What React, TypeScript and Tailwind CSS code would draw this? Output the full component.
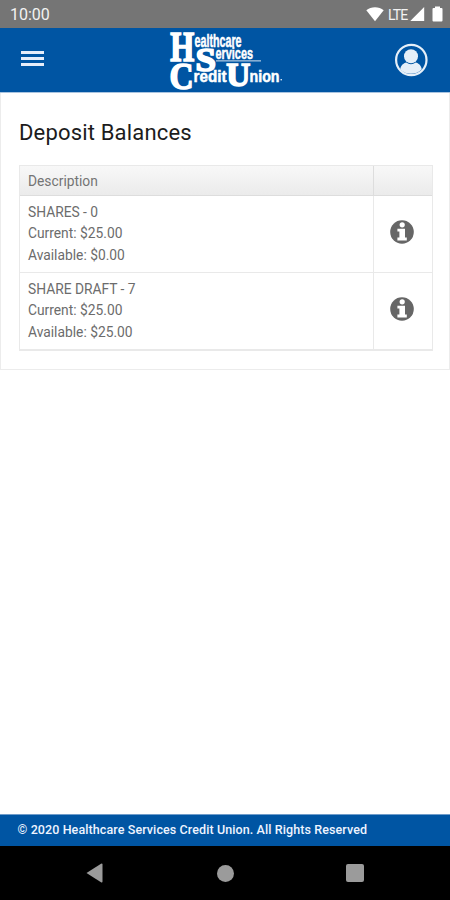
import React from "react";

const accounts = [
  { name: "SHARES - 0", current: "$25.00", available: "$0.00" },
  { name: "SHARE DRAFT - 7", current: "$25.00", available: "$25.00" },
];

function InfoIcon() {
  return (
    <svg width="24" height="24" viewBox="0 0 24 24">
      <circle cx="12" cy="12" r="11.8" className="fill-[#666666]" />
      <g className="fill-white">
        <circle cx="12.2" cy="4.8" r="2.6" />
        <path d="M7.4 8.8H15V17.6H16.8V20.6H7.4V17.6H9.4V11.6H7.4Z" />
      </g>
    </svg>
  );
}

function StatusBar() {
  return (
    <div className="flex h-7 items-center justify-between bg-[#757575] pl-[10px] pr-[7px] text-[#f2f2f2]">
      <span className="pt-[2px] text-[16px] leading-none">10:00</span>
      <div className="flex items-center">
        <svg width="18" height="16" viewBox="0 0 18 16" className="mr-[4px] fill-white">
          <path d="M0.3 4.2C5 0.2 13 0.2 17.7 4.2L9 15.3Z" />
        </svg>
        <span className="mr-[3px] w-[19px] pt-px text-[14px] leading-none tracking-[-0.9px]">LTE</span>
        <svg width="15" height="16" viewBox="0 0 15 16" className="mr-[7px] fill-white">
          <path d="M14.2 1V15H0.3Z" />
        </svg>
        <svg width="11" height="16" viewBox="0 0 11 16" className="fill-white">
          <path d="M3 0.5H8V2H9.5Q10.5 2 10.5 3V14.5Q10.5 15.5 9.5 15.5H1.5Q0.5 15.5 0.5 14.5V3Q0.5 2 1.5 2H3Z" />
        </svg>
      </div>
    </div>
  );
}

function Logo() {
  const fit = "spacingAndGlyphs";
  return (
    <svg width="116" height="62" viewBox="168 30 116 62" className="overflow-visible fill-white stroke-white">
      <g className="font-['Liberation_Serif',serif] font-bold" strokeWidth="1.7">
        <text x="170.3" y="61" fontSize="42" textLength="24" lengthAdjust={fit}>H</text>
        <text x="195.5" y="70.6" fontSize="33" textLength="20.5" lengthAdjust={fit}>S</text>
        <text x="169.5" y="88.8" fontSize="38" textLength="24" lengthAdjust={fit}>C</text>
        <text x="226.3" y="86" fontSize="33" textLength="24" lengthAdjust={fit}>U</text>
      </g>
      <g className="font-['Liberation_Sans',sans-serif] font-bold" strokeWidth="0.5">
        <text x="194.5" y="46.5" fontSize="18" textLength="47" lengthAdjust={fit}>ealthcare</text>
        <text x="215.5" y="59" fontSize="17" textLength="37.5" lengthAdjust={fit}>ervices</text>
        <text x="193.5" y="81.5" fontSize="16" textLength="33" lengthAdjust={fit}>redit</text>
        <text x="249.5" y="81.5" fontSize="16" textLength="30" lengthAdjust={fit}>nion</text>
      </g>
      <rect x="216" y="60.2" width="45" height="1.3" stroke="none" opacity="0.65" />
      <circle cx="281.2" cy="79.8" r="0.8" stroke="none" />
    </svg>
  );
}

function Header() {
  return (
    <header className="flex h-[65px] items-start justify-between border-b border-[#a9c4e0] bg-[#0055a3] pl-[21px] pr-[22px]">
      <div className="mt-[23px] flex w-[23px] flex-col gap-[3px]">
        <div className="h-[3px] bg-[#e6edfa]" />
        <div className="h-[3px] bg-[#e6edfa]" />
        <div className="h-[3px] bg-[#e6edfa]" />
      </div>
      <div className="ml-[124px] mt-[2px] flex-1">
        <Logo />
      </div>
      <svg width="34" height="34" viewBox="0 0 34 34" className="mt-[15px]">
        <circle cx="17.3" cy="17" r="15.2" fill="none" stroke="#e6eff8" strokeWidth="2.2" />
        <path d="M6.2 26.2C7 22 9.4 20.4 12.3 19.5Q17 23 21.7 19.5C24.6 20.4 27 22 27.8 26.2C22.5 32.3 11.5 32.3 6.2 26.2Z" fill="#e6eff8" />
        <circle cx="17" cy="13.3" r="7" fill="#e6eff8" />
      </svg>
    </header>
  );
}

export default function App() {
  return (
    <div className="flex h-[900px] w-[450px] flex-col overflow-hidden bg-white font-[Roboto,sans-serif]">
      <StatusBar />
      <Header />
      <main className="flex-1">
        <section className="h-[277px] border border-t-0 border-[#ececec] px-[18px] pt-[25px]">
          <h1 className="h-[47px] text-[22px] leading-[30px] tracking-[0.17px] text-[#1c1c1c]">Deposit Balances</h1>
          <div className="w-[414px] border border-b-2 border-[#e9e9e9]">
            <div className="flex h-[30px] border-b border-[#dddddd] bg-linear-to-b from-[#f8f8f8] to-[#ebebeb]">
              <div className="flex w-[354px] items-center border-r border-[#dddddd] pl-[8px] pt-px text-[13.8px] text-[#747474]">
                Description
              </div>
            </div>
            {accounts.map((account, index) => (
              <div key={account.name} className={index === 0 ? "flex h-[77px] border-b border-[#e9e9e9]" : "flex h-[76px]"}>
                <div className="w-[354px] border-r border-[#e9e9e9] pl-[8px] pt-[5.5px] text-[13.8px] leading-[21.6px] text-[#6c6c6c]">
                  <p>{account.name}</p>
                  <p>Current: {account.current}</p>
                  <p>Available: {account.available}</p>
                </div>
                <div className="flex flex-1 justify-center pr-[2px] pt-[24px]">
                  <InfoIcon />
                </div>
              </div>
            ))}
          </div>
        </section>
      </main>
      <footer className="flex h-8 items-center border-t border-[#6f9cca] bg-[#0055a3] pb-px pl-[17.5px]">
        <span className="whitespace-nowrap text-[12.5px] font-medium tracking-[0.1px] text-[#eef4ff]">
          © 2020 Healthcare Services Credit Union. All Rights Reserved
        </span>
      </footer>
      <nav className="flex h-[54px] items-center bg-black pl-[86px]">
        <svg width="17" height="20" viewBox="0 0 17 20" className="fill-[#9b9b9b]">
          <path d="M0.5 10L15 0.7Q16.5 0 16.5 1.5V18.5Q16.5 20 15 19.3Z" />
        </svg>
        <div className="ml-[114px] size-[17px] rounded-full bg-[#9b9b9b]" />
        <div className="ml-[112px] size-[18px] rounded-[2px] bg-[#9b9b9b]" />
      </nav>
    </div>
  );
}
